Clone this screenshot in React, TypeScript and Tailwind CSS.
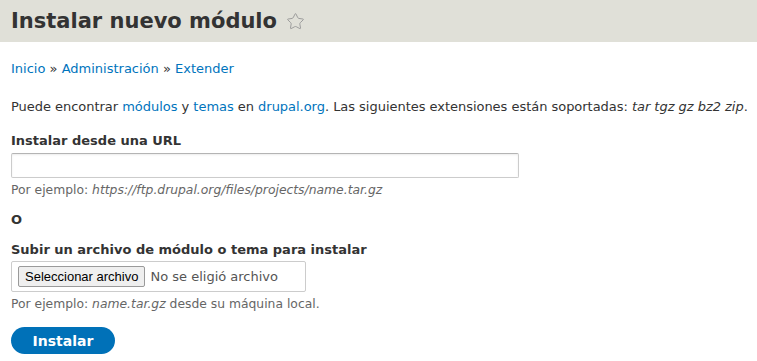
import { Star } from "lucide-react"

const font = { fontFamily: '"DejaVu Sans", sans-serif' }

function Link({ children }: { children: React.ReactNode }) {
  return <a className="text-[#0074bd] no-underline">{children}</a>
}

export default function App() {
  return (
    <div className="min-h-[361px] bg-white text-[#333]" style={font}>
      {/* Page title */}
      <div className="h-[42px] bg-[#e0e0d8] px-[11px] flex items-center">
        <h1 className="text-[21px] font-bold leading-none text-[#333] flex items-center">
          Instalar nuevo módulo
          <Star className="ml-[9px] h-[19px] w-[19px] text-[#999]" strokeWidth={1.2} />
        </h1>
      </div>

      <div className="px-[11px] text-[13px] leading-[18px]">
        {/* Breadcrumb */}
        <div className="mt-[18px]">
          <Link>Inicio</Link> » <Link>Administración</Link> » <Link>Extender</Link>
        </div>

        <p className="mt-[20px] whitespace-nowrap tracking-[-0.03px]">
          Puede encontrar <Link>módulos</Link> y <Link>temas</Link> en <Link>drupal.org</Link>. Las siguientes
          extensiones están soportadas: <em>tar tgz gz bz2 zip</em>.
        </p>

        {/* URL */}
        <div className="mt-[16px]">
          <label className="block font-bold">Instalar desde una URL</label>
          <input
            type="text"
            className="mt-[3px] block h-[25px] w-[508px] border border-[#ccc] border-t-[#b4b4b4] rounded-[2px] bg-white shadow-[inset_0_1px_2px_rgba(0,0,0,0.08)]"
          />
          <div className="mt-[3px] text-[12.35px] text-[#666]">
            Por ejemplo: <em>https://ftp.drupal.org/files/projects/name.tar.gz</em>
          </div>
        </div>

        <div className="mt-[12px] font-bold">O</div>

        {/* File upload */}
        <div className="mt-[12px]">
          <label className="block font-bold">Subir un archivo de módulo o tema para instalar</label>
          <div className="mt-[2px] flex h-[31px] w-[295px] items-center border border-[#ccc] rounded-[2px] pl-[6px]">
            <button
              className="h-[21px] px-[6px] border border-[#9a9a9a] rounded-[2px] bg-[#efefef] text-[13px] text-black leading-none"
              style={{ fontFamily: '"Liberation Sans", Arial, sans-serif' }}
            >
              Seleccionar archivo
            </button>
            <span className="ml-[5px] text-[#555]">No se eligió archivo</span>
          </div>
          <div className="mt-[3px] text-[12.35px] text-[#666]">
            Por ejemplo: <em>name.tar.gz</em> desde su máquina local.
          </div>
        </div>

        <button className="mt-[14px] h-[27px] w-[104px] rounded-full bg-[#0071b8] text-white font-bold text-[14px] leading-none">
          Instalar
        </button>
      </div>
    </div>
  )
}
